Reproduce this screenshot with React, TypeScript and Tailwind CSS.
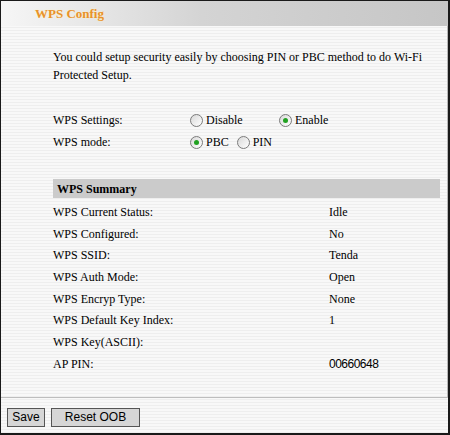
import React from "react";

type RadioProps = { checked?: boolean; label: string };

function Radio({ checked, label }: RadioProps) {
  return (
    <label className="flex items-center gap-[3px]">
      <span className="flex h-[13px] w-[13px] items-center justify-center rounded-full border border-[#7b7b7b] bg-[linear-gradient(135deg,#d8d8d8,#ffffff)]">
        {checked && <span className="h-[5px] w-[5px] rounded-full bg-[#21a121]" />}
      </span>
      <span>{label}</span>
    </label>
  );
}

const summary: [string, string][] = [
  ["WPS Current Status:", "Idle"],
  ["WPS Configured:", "No"],
  ["WPS SSID:", "Tenda"],
  ["WPS Auth Mode:", "Open"],
  ["WPS Encryp Type:", "None"],
  ["WPS Default Key Index:", "1"],
  ["WPS Key(ASCII):", ""],
  ["AP PIN:", "00660648"],
];

export default function App() {
  return (
    <div className="box-border flex h-[435px] w-[450px] flex-col border-t border-l border-r-2 border-b-2 border-[#1a1a1a] bg-[repeating-linear-gradient(to_bottom,#f8f8f8_0px,#f8f8f8_2px,#eeeeee_2px,#eeeeee_3px)] font-['Liberation_Serif',serif] text-[12px] text-black">
      <div className="flex h-[25px] shrink-0 items-center bg-[linear-gradient(to_right,#f6f6f6_0%,#d4d4d4_45%,#c6c6c6_100%)] pl-[34px]">
        <span className="text-[13px] font-bold text-[#e8922a] [text-shadow:0_0_2px_#fff1c0]">WPS Config</span>
      </div>

      <div className="flex-1 border-r border-[#b8b8b8] pl-[52px] pr-[7px]">
        <p className="mt-[22px] leading-[18px]">
          You could setup security easily by choosing PIN or PBC method to do Wi-Fi Protected Setup.
        </p>

        <div className="mt-[25px] flex h-[22px] items-center">
          <span className="w-[137px]">WPS Settings:</span>
          <div className="w-[89px]">
            <Radio label="Disable" />
          </div>
          <Radio checked label="Enable" />
        </div>
        <div className="flex h-[22px] items-center">
          <span className="w-[137px]">WPS mode:</span>
          <div className="flex items-center gap-[8px]">
            <Radio checked label="PBC" />
            <Radio label="PIN" />
          </div>
        </div>

        <div className="mt-[26px] flex h-[19px] w-[387px] items-center bg-[#cbcbcb] pl-[4px] font-bold">
          WPS Summary
        </div>
        <div className="pt-[3px]">
          {summary.map(([k, v]) => (
            <div key={k} className="flex h-[21.7px] items-center">
              <span className="w-[276px]">{k}</span>
              <span className={v === "00660648" ? "font-['Liberation_Sans',sans-serif] tracking-[-0.5px]" : ""}>{v}</span>
            </div>
          ))}
        </div>
      </div>

      <div className="h-[36px] shrink-0 border-t border-[#bdbdbd] pt-[10px] pl-[6px]">
        <div className="flex gap-[6px] font-['Liberation_Sans',sans-serif] text-[12px]">
          <button className="h-[19px] w-[38px] border border-[#555] bg-[#d6d6d6] leading-[17px]">Save</button>
          <button className="h-[19px] w-[89px] border border-[#555] bg-[#d6d6d6] leading-[17px]">Reset OOB</button>
        </div>
      </div>
    </div>
  );
}
